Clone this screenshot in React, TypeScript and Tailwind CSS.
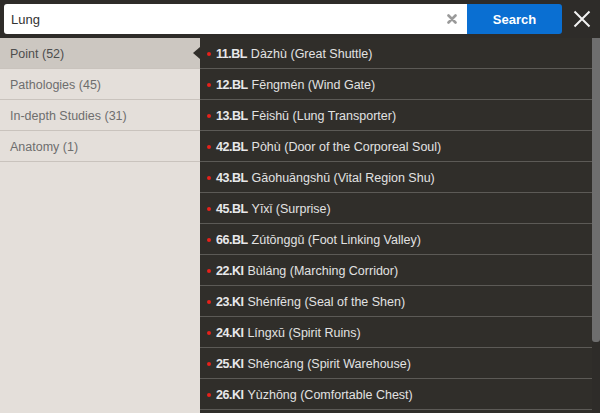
import React from "react";

const cats = [
  { label: "Point (52)", active: true },
  { label: "Pathologies (45)" },
  { label: "In-depth Studies (31)" },
  { label: "Anatomy (1)" },
];

const items = [
  ["11.BL", "Dàzhù (Great Shuttle)"],
  ["12.BL", "Fēngmén (Wind Gate)"],
  ["13.BL", "Fèishū (Lung Transporter)"],
  ["42.BL", "Pòhù (Door of the Corporeal Soul)"],
  ["43.BL", "Gāohuāngshū (Vital Region Shu)"],
  ["45.BL", "Yīxǐ (Surprise)"],
  ["66.BL", "Zútōnggǔ (Foot Linking Valley)"],
  ["22.KI", "Bùláng (Marching Corridor)"],
  ["23.KI", "Shénfēng (Seal of the Shen)"],
  ["24.KI", "Língxū (Spirit Ruins)"],
  ["25.KI", "Shéncáng (Spirit Warehouse)"],
  ["26.KI", "Yùzhōng (Comfortable Chest)"],
];

export default function App() {
  return (
    <div
      className="w-[600px] h-[413px] bg-[#2e2c29] flex flex-col overflow-hidden"
      style={{ fontFamily: '"Liberation Sans", Arial, sans-serif' }}
    >
      <div className="h-[38px] shrink-0 flex items-start pt-[4px] pl-[4px]">
        <div className="w-[463px] h-[30px] bg-white rounded-l-[3px] flex items-center pl-[7px] pr-[10px] pt-[2px]">
          <span className="flex-1 text-[13px] text-[#333]">Lung</span>
          <svg width="10" height="10" viewBox="0 0 10 10" className="-mt-[2px]">
            <path d="M1.5 1.5 L8.5 8.5 M8.5 1.5 L1.5 8.5" stroke="#9a9a9a" strokeWidth="2.6" strokeLinecap="round" />
          </svg>
        </div>
        <div className="w-[95px] h-[30px] bg-[#0a6fd2] rounded-r-[3px] flex items-center justify-center text-white font-bold text-[13px] pt-[2px]">
          Search
        </div>
        <div className="flex-1 h-[30px] flex items-center justify-center pl-[2px]">
          <svg width="18" height="18" viewBox="0 0 18 18">
            <path d="M1.5 1.5 L16.5 16.5 M16.5 1.5 L1.5 16.5" stroke="#f2f2f2" strokeWidth="2" />
          </svg>
        </div>
      </div>
      <div className="flex flex-1 min-h-0">
        <div className="w-[200px] bg-[#e4dfda] flex flex-col">
          {cats.map((c) => (
            <div
              key={c.label}
              className={`relative h-[31px] shrink-0 flex items-center pl-[10px] pt-[2px] text-[12.5px] border-b border-[#c9c3bd] ${
                c.active ? "bg-[#ccc7c1] text-[#4e4e4e]" : "text-[#6e6e6e]"
              }`}
            >
              {c.label}
              {c.active && (
                <span className="absolute right-0 top-[9px] w-0 h-0 border-y-[6px] border-y-transparent border-r-[7px] border-r-[#302e2a]" />
              )}
            </div>
          ))}
        </div>
        <div className="flex-1 flex bg-[#302e2a] min-w-0">
          <div className="flex-1 flex flex-col overflow-hidden">
            {items.map(([code, name]) => (
              <div
                key={code}
                className="h-[31px] shrink-0 flex items-center pl-[7px] pt-[2px] border-b border-[#5c5a56] text-[12.5px] text-[#e2e2e2] whitespace-nowrap"
              >
                <span className="w-[4px] h-[4px] rounded-full bg-[#e8211b] mr-[5px]" />
                <span className="font-bold text-[12.5px] tracking-[-0.5px] text-[#e8e8ea] mr-[4px]">{code}</span>
                <span>{name}</span>
              </div>
            ))}
          </div>
          <div className="w-[8px] shrink-0 bg-[#2e2c29]">
            <div className="h-[304px] bg-[#6e6e6e] rounded-b-[3px]" />
          </div>
        </div>
      </div>
    </div>
  );
}
